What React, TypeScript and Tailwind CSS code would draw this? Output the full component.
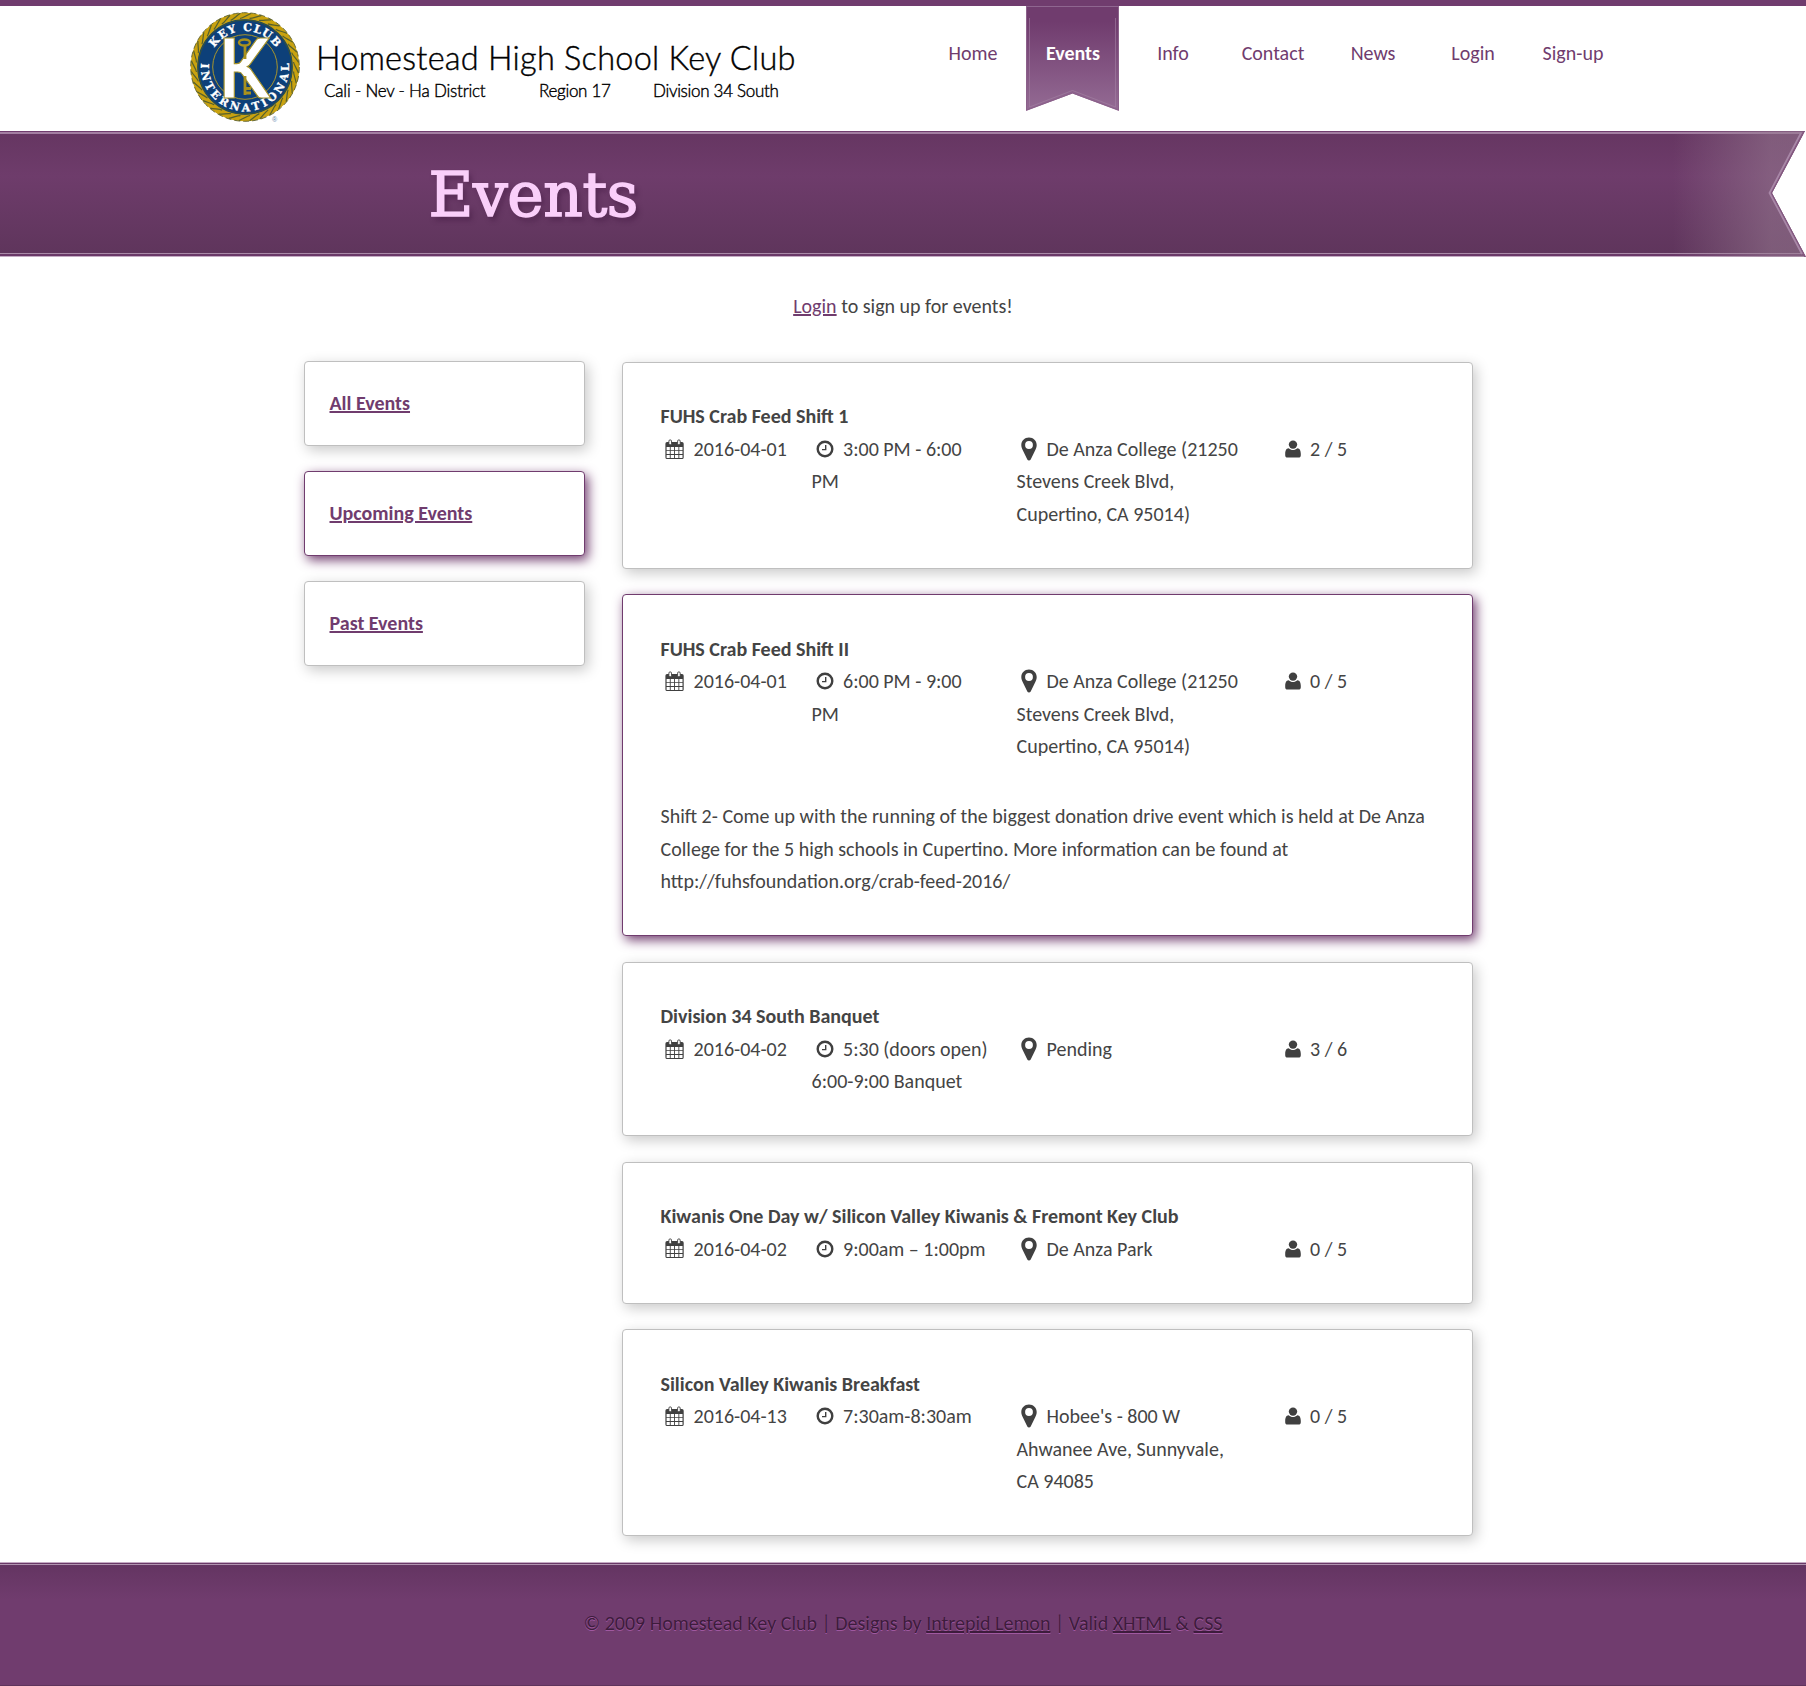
import React from "react";

const nav = ["Home", "Events", "Info", "Contact", "News", "Login", "Sign-up"];

type EventInfo = {
  title: string;
  date: string;
  time: string[];
  place: string[];
  people: string;
  active?: boolean;
  description?: string[];
};

const crabPlace = ["De Anza College (21250", "Stevens Creek Blvd,", "Cupertino, CA 95014)"];

const events: EventInfo[] = [
  { title: "FUHS Crab Feed Shift 1", date: "2016-04-01", time: ["3:00 PM - 6:00", "PM"], place: crabPlace, people: "2 / 5" },
  {
    title: "FUHS Crab Feed Shift II",
    date: "2016-04-01",
    time: ["6:00 PM - 9:00", "PM"],
    place: crabPlace,
    people: "0 / 5",
    active: true,
    description: [
      "Shift 2- Come up with the running of the biggest donation drive event which is held at De Anza",
      "College for the 5 high schools in Cupertino. More information can be found at",
      "http://fuhsfoundation.org/crab-feed-2016/",
    ],
  },
  { title: "Division 34 South Banquet", date: "2016-04-02", time: ["5:30 (doors open)", "6:00-9:00 Banquet"], place: ["Pending"], people: "3 / 6" },
  { title: "Kiwanis One Day w/ Silicon Valley Kiwanis & Fremont Key Club", date: "2016-04-02", time: ["9:00am – 1:00pm"], place: ["De Anza Park"], people: "0 / 5" },
  { title: "Silicon Valley Kiwanis Breakfast", date: "2016-04-13", time: ["7:30am-8:30am"], place: ["Hobee's - 800 W", "Ahwanee Ave, Sunnyvale,", "CA 94085"], people: "0 / 5" },
];

function CalendarIcon() {
  return (
    <svg width="19" height="21" viewBox="0 0 19 21" className="shrink-0">
      <path fill="#404040" fillRule="evenodd" d="M2 3h15a1.7 1.7 0 0 1 1.7 1.7v13.8A1.6 1.6 0 0 1 17 20H2A1.6 1.6 0 0 1 .4 18.500V4.700A1.700 1.700 0 0 1 2 3ZM1.600 8v2.900h3.200V8ZM5.700 8v2.900h3.400V8ZM10 8v2.900h3.400V8ZM14.300 8v2.900h3.200V8ZM1.600 11.800v3.200h3.200v-3.200ZM5.700 11.800v3.200h3.400v-3.200ZM10 11.800v3.200h3.400v-3.200ZM14.300 11.800v3.200h3.200v-3.200ZM1.600 15.900v3h3.200v-3ZM5.700 15.900v3h3.400v-3ZM10 15.900v3h3.400v-3ZM14.300 15.900v3h3.200v-3Z" />
      <rect x="3.900" y="0.900" width="2.600" height="4.900" rx="1.200" fill="#fff" stroke="#404040" strokeWidth="0.900" />
      <rect x="12.600" y="0.900" width="2.600" height="4.900" rx="1.200" fill="#fff" stroke="#404040" strokeWidth="0.900" />
    </svg>
  );
}

function ClockIcon() {
  return (
    <svg width="18" height="18" viewBox="0 0 18 18" fill="none" stroke="#404040" className="shrink-0">
      <circle cx="9" cy="9" r="7.300" strokeWidth="2.400" />
      <path d="M9.700 5v4.600H6" strokeWidth="1.400" />
    </svg>
  );
}

function PinIcon() {
  return (
    <svg width="16" height="24" viewBox="0 0 16 24" className="shrink-0">
      <path fill="#404040" fillRule="evenodd" d="M8 .5c4.400 0 7.700 3.300 7.700 7.500 0 2-.7 3.600-1.500 5.300L9.700 22.500c-.7 1.300-2.700 1.300-3.400 0L1.800 13.300C1 11.600.3 10 .3 8 .3 3.800 3.600.5 8 .5Zm0 3.600a3.900 3.900 0 1 0 0 7.800 3.900 3.900 0 0 0 0-7.800Z" />
    </svg>
  );
}

function UserIcon() {
  return (
    <svg width="16" height="18" viewBox="0 0 16 18" fill="#404040" className="shrink-0">
      <circle cx="8" cy="4.600" r="4.200" />
      <path d="M3.700 8.200C1 8.400.2 11 .2 13.800v1.500C.2 16.800 1 17.600 2.500 17.600h11c1.500 0 2.300-.8 2.300-2.300v-1.500c0-2.800-.8-5.400-3.500-5.600-2.500 2.400-6.100 2.400-8.600 0Z" />
    </svg>
  );
}

const ropeAngles = Array.from({ length: 32 }, (_, i) => (i * 360) / 32);

function Seal() {
  return (
    <svg width="112" height="112" viewBox="0 0 112 112" className="shrink-0">
      <defs>
        <path id="ring-top" d="M18.500 55.500a36.500 36.500 0 0 1 73 0" />
        <path id="ring-bottom" d="M12 46a44 44 0 1 0 86 0" />
      </defs>
      <circle cx="55" cy="55" r="51" fill="#0d4079" stroke="#c9a20f" strokeWidth="6.500" />
      <circle cx="55" cy="55" r="54.300" fill="none" stroke="#5c6130" strokeWidth="0.900" strokeDasharray="6 3" />
      <circle cx="55" cy="55" r="47" fill="none" stroke="#3b5433" strokeWidth="1" />
      {ropeAngles.map((a) => (
        <path key={a} d="M50 6.500C53 6 57 3 61 1.500" transform={`rotate(${a} 55 55)`} fill="none" stroke="#55602e" strokeWidth="1.200" />
      ))}
      <circle cx="55" cy="55" r="32.300" fill="none" stroke="#a8952c" strokeWidth="1" />
      <g fill="#fff" stroke="#fff" strokeWidth="0.300" className="font-['DejaVu_Serif','Liberation_Serif',serif] font-bold">
        <text fontSize="11">
          <textPath href="#ring-top" startOffset="50%" textAnchor="middle" textLength="73">KEY CLUB</textPath>
        </text>
        <text fontSize="11">
          <textPath href="#ring-bottom" startOffset="50%" textAnchor="middle" textLength="146">INTERNATIONAL</textPath>
        </text>
      </g>
      <text x="28" y="85.500" fontSize="82" textLength="52" lengthAdjust="spacingAndGlyphs" fill="#fff" stroke="#a8952c" strokeWidth="1.200" className="font-[Lato,sans-serif] font-bold">K</text>
      <g fill="none" stroke="#a8911d">
        <ellipse cx="54.500" cy="30.500" rx="5.500" ry="3" strokeWidth="2.400" />
        <path d="M55 34v13M55 64v19" strokeWidth="2.800" />
        <path d="M55 76.500h6M55 81h6" strokeWidth="3" />
      </g>
      <text x="82" y="110" fontSize="7" fill="#5d83ab" className="font-['Liberation_Sans',sans-serif]">®</text>
    </svg>
  );
}

function Ribbon() {
  return (
    <svg width="93" height="106" viewBox="0 0 93 106" className="absolute left-[3px] top-0">
      <defs>
        <linearGradient id="ribbon" x1="0" y1="0" x2="0" y2="1">
          <stop offset="0.150" stopColor="#703c6e" />
          <stop offset="1" stopColor="#946b94" />
        </linearGradient>
      </defs>
      <path d="M0 0H93V105L46.500 87.500 0 105Z" fill="url(#ribbon)" />
      <path d="M.5 1V104L46.500 87 92.500 104V1" fill="none" stroke="#8b608a" />
      <path d="M3.500 12V101L46.500 84.500 89.500 101V12" fill="none" stroke="#a482a4" strokeOpacity="0.600" />
      <path d="M0 .5H93" stroke="#8f6690" />
    </svg>
  );
}

function BannerTail() {
  return (
    <svg width="140" height="126" viewBox="0 0 140 126" className="ml-auto shrink-0">
      <defs>
        <linearGradient id="sheen" x1="0" y1="0" x2="1" y2="0">
          <stop offset="0.050" stopColor="#967a90" stopOpacity="0" />
          <stop offset="0.750" stopColor="#967a90" stopOpacity="0.550" />
        </linearGradient>
      </defs>
      <path d="M0 0H139L106 62.500 140 126H0Z" fill="url(#sheen)" />
      <path d="M139 0L106 62 140 126" fill="none" stroke="#83577f" strokeWidth="3" />
      <path d="M135 2L103.500 62 136 123" fill="none" stroke="#a887a7" strokeWidth="1.800" />
    </svg>
  );
}

function EventCard({ event }: { event: EventInfo }) {
  return (
    <article
      className={
        event.active
          ? "rounded-[4px] border border-[#703c6e] bg-white px-[38px] py-[37.400px] shadow-[3px_4px_12px_#703c6e]"
          : "rounded-[4px] border border-[#bfbfbf] bg-white px-[38px] py-[37.400px] shadow-[3px_4px_14px_rgba(0,0,0,0.22)]"
      }
    >
      <h2 className="whitespace-nowrap font-bold">{event.title}</h2>
      <div className="grid grid-cols-[151px_205px_264px_1fr] whitespace-nowrap">
        <div className="flex h-[32.500px] items-center gap-[9.500px] pl-[4.500px]">
          <CalendarIcon />
          {event.date}
        </div>
        <div>
          <div className="flex h-[32.500px] items-center gap-[9px] pl-[4.500px]">
            <ClockIcon />
            {event.time[0]}
          </div>
          {event.time.slice(1).map((line) => (
            <div key={line}>{line}</div>
          ))}
        </div>
        <div>
          <div className="flex h-[32.500px] items-center gap-[9.500px] pl-[4.500px]">
            <PinIcon />
            {event.place[0]}
          </div>
          {event.place.slice(1).map((line) => (
            <div key={line}>{line}</div>
          ))}
        </div>
        <div className="flex h-[32.500px] items-center gap-[9.500px] pl-[4px]">
          <UserIcon />
          {event.people}
        </div>
      </div>
      {event.description && (
        <p className="mt-[37.800px] whitespace-nowrap">
          {event.description.map((line) => (
            <span key={line} className="block">{line}</span>
          ))}
        </p>
      )}
    </article>
  );
}

export default function App() {
  return (
    <div className="flex h-[1686px] w-[1806px] flex-col overflow-hidden bg-white font-[Carlito,Lato,sans-serif] text-[20px] leading-[32.500px] text-[#444]">
      <header className="flex h-[131px] shrink-0 border-t-[6px] border-[#703c6e] pl-[190px]">
        <div className="flex w-[733px] pt-[6px]">
          <Seal />
          <div className="ml-[14px] whitespace-nowrap pt-[26px] font-[Lato,sans-serif] font-light text-black [-webkit-text-stroke:0.400px_#000]">
            <div className="text-[32.500px] leading-[40px] tracking-[0.250px]">Homestead High School Key Club</div>
            <div className="flex pt-px text-[17px] leading-6 tracking-[-0.300px]">
              <span className="ml-[8px] w-[215px] tracking-[-0.200px]">Cali - Nev - Ha District</span>
              <span className="w-[114px]">Region 17</span>
              <span>Division 34 South</span>
            </div>
          </div>
        </div>
        <nav className="flex">
          {nav.map((label) => (
            <a key={label} className="relative flex h-[96px] w-[100px] justify-center pt-[31px] text-[#703c6e]">
              {label === "Events" && <Ribbon />}
              <span className={label === "Events" ? "relative font-bold text-white" : "relative"}>{label}</span>
            </a>
          ))}
        </nav>
      </header>

      <div className="h-[126px] shrink-0 bg-white">
        <div className="flex h-full bg-[linear-gradient(to_bottom,#703c6e_0px,#703c6e_1px,#a37ea2_1px,#a37ea2_3px,#663662_3px,#6e3c6b_45px,#5f355c_122px,#a98aa8_122px,#a98aa8_123px,#6a3968_123px,#6a3968_125px,#c4abc4_125px)] [clip-path:polygon(0_0,1805px_0,1772px_62px,1806px_126px,0_126px)]">
          <h1 className="ml-[428.500px] mt-[27px] font-['DejaVu_Serif',serif] text-[61.500px] leading-[74px] tracking-[-0.400px] text-[#facffa] [-webkit-text-stroke:1.500px_#facffa] [text-shadow:3px_4px_5px_rgba(60,20,60,0.5)]">Events</h1>
          <BannerTail />
        </div>
      </div>

      <p className="mt-[33px] text-center leading-[32px]">
        <a className="text-[#703c6e] underline">Login</a> to sign up for events!
      </p>

      <main className="mt-[39px] flex pl-[304px]">
        <aside className="flex w-[317.500px] shrink-0 flex-col gap-[25.300px] pt-[0.400px]">
          {["All Events", "Upcoming Events", "Past Events"].map((label) => (
            <div
              key={label}
              className={
                label === "Upcoming Events"
                  ? "flex h-[84.700px] w-[281px] items-center rounded-[4px] border border-[#703c6e] bg-white pl-[24.500px] shadow-[3px_4px_12px_#703c6e]"
                  : "flex h-[84.700px] w-[281px] items-center rounded-[4px] border border-[#bfbfbf] bg-white pl-[24.500px] shadow-[3px_4px_14px_rgba(0,0,0,0.22)]"
              }
            >
              <a className="font-bold text-[#703c6e] underline">{label}</a>
            </div>
          ))}
        </aside>
        <section className="flex w-[851px] flex-col gap-[25.600px] pt-[0.900px]">
          {events.map((event) => (
            <EventCard key={event.title} event={event} />
          ))}
        </section>
      </main>

      <footer className="mt-auto h-[124px] shrink-0 border-b border-[#5e345c] bg-[linear-gradient(to_bottom,#c4abc4_0px,#c4abc4_1px,#6a3968_1px,#6a3968_2px,#b194b0_2px,#b194b0_3px,#643562_3px,#703c6e_38px)] pt-[45px] text-center text-[#3d1c3c] [text-shadow:0_1px_0_#a058a0]">
        © 2009 Homestead Key Club | Designs by <a className="underline">Intrepid Lemon</a> | Valid <a className="underline">XHTML</a> &amp; <a className="underline">CSS</a>
      </footer>
    </div>
  );
}
